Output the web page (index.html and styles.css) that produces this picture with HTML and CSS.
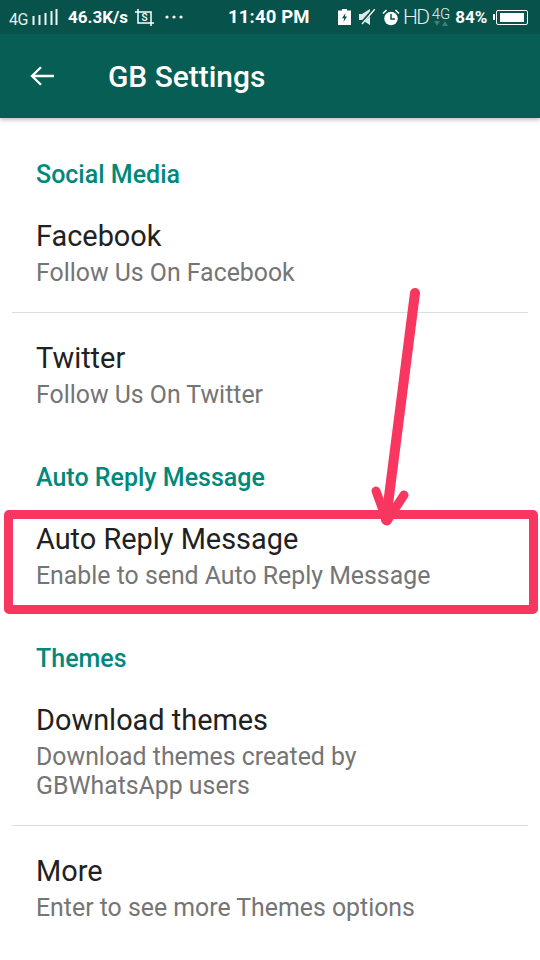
FILE: index.html
```html
<!DOCTYPE html>
<html lang="en">
<head>
<meta charset="utf-8">
<title>GB Settings</title>
<link rel="stylesheet" href="styles.css">
</head>
<body>
<div class="screen">
  <header class="appbar">
    <div class="status">
      <div class="status-left">
        <span class="net">4G</span>
        <svg class="sig" width="27" height="16" viewBox="0 0 25 16"><path d="M1.500 7V16M7.500 6V16M13.500 4V16M19.500 2V16M24.500 0V16" stroke="#eef5f3" stroke-width="2" fill="none"/></svg>
        <span class="speed">46.3K/s</span>
        <svg class="shot" width="19" height="17" viewBox="0 0 19 17"><path d="M3 0V14H19M0 3H16V17" stroke="#fff" stroke-width="1.500" fill="none"/><text x="6.500" y="11.500" class="shot-s">S</text></svg>
        <svg class="dots" width="18" height="4" viewBox="0 0 18 4"><circle cx="2" cy="2" r="1.600" fill="#fff"/><circle cx="9" cy="2" r="1.600" fill="#fff"/><circle cx="16" cy="2" r="1.600" fill="#fff"/></svg>
      </div>
      <span class="time">11:40 PM</span>
      <div class="status-right">
        <svg width="13" height="16" viewBox="0 0 13 16"><path d="M4 0H9V1.500H13V16H0V1.500H4Z" fill="#fff"/><path d="M7.500 4L4 9.200H6.200L5.500 13L9 7.500H6.800Z" fill="#07524a"/></svg>
        <svg class="mute" width="16" height="16" viewBox="0 0 16 16"><path d="M0 5H3L11 0V16L3 11H0Z" fill="#dfeae7"/><path d="M1 16L15 0" stroke="#07524a" stroke-width="3"/><path d="M3 15L16 0" stroke="#fff" stroke-width="1.300"/></svg>
        <svg class="alarm" width="18" height="17" viewBox="0 0 18 17"><circle cx="9" cy="9.500" r="6.800" fill="#fff"/><path d="M9 5V10H13" stroke="#07524a" stroke-width="1.500" fill="none"/><path d="M1 4.500L4.500 1M17 4.500L13.500 1" stroke="#fff" stroke-width="1.600"/></svg>
        <span class="hd">HD</span>
        <div class="lte">
          <span class="lte-t">4G</span>
          <svg width="14" height="6" viewBox="0 0 14 6"><path d="M0 0H6L3 5ZM8 5L11 0L14 5Z" fill="#3f7f75"/></svg>
        </div>
        <span class="pct">84%</span>
        <div class="battery"><span class="battery-tip"></span><span class="battery-case"><span class="battery-fill"></span></span></div>
      </div>
    </div>
    <div class="toolbar">
      <svg class="back" width="24" height="20" viewBox="0 0 24 20"><path d="M24 10H2M11 1.200L2 10L11 18.800" stroke="#fff" stroke-width="2.300" fill="none"/></svg>
      <h1 class="title">GB Settings</h1>
    </div>
  </header>

  <main class="list">
    <section class="group group-social">
      <h2 class="cat">Social Media</h2>
      <div class="item">
        <div class="item-title">Facebook</div>
        <div class="item-sub">Follow Us On Facebook</div>
      </div>
      <div class="divider"></div>
      <div class="item">
        <div class="item-title">Twitter</div>
        <div class="item-sub">Follow Us On Twitter</div>
      </div>
    </section>
    <section class="group group-auto">
      <h2 class="cat">Auto Reply Message</h2>
      <div class="item">
        <div class="item-title">Auto Reply Message</div>
        <div class="item-sub">Enable to send Auto Reply Message</div>
      </div>
    </section>
    <section class="group group-themes">
      <h2 class="cat">Themes</h2>
      <div class="item">
        <div class="item-title">Download themes</div>
        <div class="item-sub">Download themes created by<br>GBWhatsApp users</div>
      </div>
      <div class="divider"></div>
      <div class="item">
        <div class="item-title">More</div>
        <div class="item-sub">Enter to see more Themes options</div>
      </div>
    </section>
  </main>

  <div class="mark-box"></div>
  <svg class="mark-arrow" width="540" height="960" viewBox="0 0 540 960">
    <path d="M415 293L386 520" stroke="#f83760" stroke-width="10" stroke-linecap="round" fill="none"/>
    <path d="M376 491L387 521L404 495" stroke="#f83760" stroke-width="9" stroke-linecap="round" stroke-linejoin="round" fill="none"/>
  </svg>
</div>
</body>
</html>
```
FILE: styles.css
```css
* { box-sizing: border-box; }
html, body { margin: 0; padding: 0; background: #fff; }
.screen {
  position: relative;
  width: 540px;
  height: 960px;
  overflow: hidden;
  font-family: Roboto, "Liberation Sans", sans-serif;
  background: #fff;
}
.appbar {
  background: #075e54;
  box-shadow: 0 2px 4px rgba(0, 0, 0, .25);
  position: relative;
}
.status {
  height: 34px;
  background: #07524a;
  display: flex;
  align-items: center;
  color: #fff;
  padding: 0 9px 0 9px;
  position: relative;
}
.status-left { display: flex; align-items: center; }
.net { font-size: 16px; color: #e4efec; width: 22px; letter-spacing: -.5px; position: relative; top: 2px; }
.sig { margin-left: 0; }
.speed { font-size: 17px; font-weight: 700; margin-left: 10px; }
.shot { margin-left: 7px; }
.shot-s { font-size: 10px; font-weight: 500; fill: #fff; font-family: Roboto, sans-serif; }
.dots { margin-left: 11px; }
.time { position: absolute; left: 228px; font-size: 18.500px; font-weight: 700; letter-spacing: .15px; }
.status-right { position: absolute; left: 338px; top: 8px; display: flex; align-items: center; height: 18px; }
.mute { margin-left: 8px; }
.alarm { margin-left: 7px; }
.hd { font-size: 21px; font-weight: 300; color: #e4efec; margin-left: 3px; letter-spacing: -1.500px; }
.lte { display: flex; flex-direction: column; align-items: center; margin-left: 3px; height: 20px; }
.lte-t { font-size: 15px; line-height: 14px; font-weight: 300; color: #e4efec; }
.pct { font-size: 17px; font-weight: 700; margin-left: 5px; }
.battery { display: flex; align-items: center; margin-left: 6px; }
.battery-tip { width: 2px; height: 6px; background: #fff; }
.battery-case { width: 32px; height: 15px; border: 1px solid #fff; border-radius: 2px; padding: 2px 3px; margin-left: 1px; display: flex; }
.battery-fill { flex: 1; background: #fff; }
.toolbar {
  height: 84px;
  display: flex;
  align-items: center;
  padding: 0 0 0 30px;
}
.back { flex: none; margin-top: -1px; }
.title {
  margin: 0 0 0 54px;
  font-size: 29.900px;
  font-weight: 500;
  color: #fff;
  line-height: 34px;
  position: relative;
  top: 1px;
}
.list { display: flex; flex-direction: column; }
.group-social { padding-top: 41px; }
.group-auto { padding-top: 53px; }
.group-themes { padding-top: 53px; }
.cat {
  margin: 0;
  padding: 0 36px;
  font-size: 25px;
  line-height: 32px;
  font-weight: 500;
  color: #00897b;
}
.item { padding: 27px 36px 0; }
.item-title { font-size: 28.900px; line-height: 36px; color: #212121; }
.item-sub { font-size: 24.850px; line-height: 29px; color: #757575; margin-top: 4px; }
.divider { height: 1px; background: #dcdcdc; margin: 25px 12px 0; }
.mark-box {
  position: absolute;
  left: 4px;
  top: 510px;
  width: 534px;
  height: 104px;
  border: 9.500px solid #f83760;
  border-radius: 5px;
}
.mark-arrow { position: absolute; left: 0; top: 0; pointer-events: none; }
```
